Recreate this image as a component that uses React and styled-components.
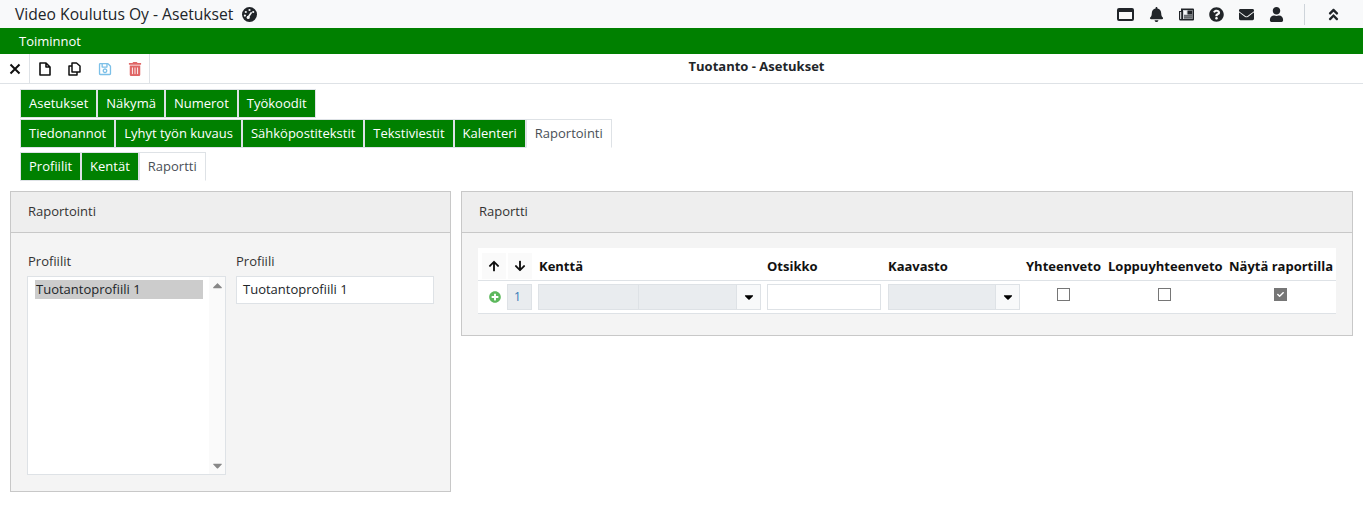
import React from "react";
import styled, { createGlobalStyle } from "styled-components";
import {
  FaBell,
  FaQuestionCircle,
  FaEnvelope,
  FaUser,
  FaAngleDoubleUp,
  FaRegSave,
  FaTrashAlt,
  FaCaretDown,
  FaCaretUp,
  FaPlusCircle,
  FaCheck,
  FaArrowUp,
  FaArrowDown,
} from "react-icons/fa";

const GlobalStyle = createGlobalStyle`
  html, body { margin: 0; padding: 0; background: #fff; }
  body { font-family: "Open Sans", "Noto Sans", sans-serif; font-size: 13px; color: #212529; }
  * { box-sizing: border-box; }
`;

const Page = styled.div`
  width: 1363px;
  height: 528px;
  overflow: hidden;
`;

const TopBar = styled.header`
  height: 28px;
  background: #f8f9fa;
  display: flex;
  align-items: center;
  padding-left: 15px;
`;

const AppTitle = styled.div`
  font-size: 15.65px;
  color: #212529;
  line-height: 28px;
`;

const TitleIcon = styled.span`
  display: inline-flex;
  margin-left: 9px;
`;

const TopIcons = styled.div`
  margin-left: auto;
  display: flex;
  align-items: center;
  color: #212529;
`;

const TopIcon = styled.span`
  display: flex;
  justify-content: center;
  width: 30px;
  font-size: 15px;
`;

const WindowIcon = styled.span`
  display: block;
  width: 17px;
  height: 13px;
  border: 2px solid #212529;
  border-top-width: 4px;
  border-radius: 2px;
  margin-right: 2px;
`;

const TopDivider = styled.span`
  width: 1px;
  height: 21px;
  background: #ced4da;
  margin: 0 19px 0 13px;
`;

const CollapseIcon = styled.span`
  display: flex;
  width: 18px;
  margin-right: 21px;
  justify-content: center;
  font-size: 15px;
`;

const MenuBar = styled.nav`
  height: 26px;
  background: #008000;
  color: #fff;
  padding-left: 19px;
  line-height: 26px;
  font-size: 13px;
`;

const ToolBar = styled.div`
  height: 30px;
  display: flex;
  border-bottom: 1px solid #dee2e6;
`;

const ToolGroup = styled.div`
  height: 29px;
  display: flex;
  align-items: center;
  padding: 0 7px;
  gap: ${(p) => p.$gap || 0}px;
  border-right: 1px solid #dee2e6;
`;

const ToolIcon = styled.span`
  display: flex;
  width: 15px;
  justify-content: center;
  font-size: ${(p) => p.$size || 14}px;
  color: ${(p) => p.$color || "#111"};
`;

const ViewTitle = styled.div`
  flex: 1;
  text-align: center;
  font-weight: 700;
  font-size: 13px;
  line-height: 25px;
  color: #212529;
`;

const TabArea = styled.div`
  padding: 5px 0 0 20px;
`;

const TabRow = styled.div`
  display: flex;
  height: 29px;
  margin-bottom: ${(p) => p.$after || 0}px;
`;

const Tab = styled.div`
  height: 29px;
  padding: 0 8px;
  line-height: 27px;
  font-size: 13px;
  border: 1px solid #dee2e6;
  border-bottom-color: ${(p) => (p.$active ? "#fff" : "#dee2e6")};
  background: ${(p) => (p.$active ? "#fff" : "#008000")};
  color: ${(p) => (p.$active ? "#495057" : "#fff")};
`;

const Panels = styled.main`
  display: flex;
  align-items: flex-start;
  gap: 10px;
  padding: 10px 10px 0;
`;

const Panel = styled.section`
  width: ${(p) => p.$width}px;
  height: ${(p) => p.$height}px;
  background: #f4f4f4;
  border: 1px solid #c8c8c8;
`;

const PanelHeader = styled.div`
  height: 41px;
  background: #eeeeee;
  border-bottom: 1px solid #c8c8c8;
  padding-left: 17px;
  line-height: 38px;
  font-size: 13px;
  color: #333;
`;

const ProfileBody = styled.div`
  display: flex;
  gap: 10px;
  padding: 20px 16px 0 16px;
`;

const Field = styled.div`
  width: ${(p) => p.$width}px;
`;

const FieldLabel = styled.div`
  height: 23px;
  line-height: 16px;
  padding-left: ${(p) => p.$indent || 0}px;
  font-size: 13px;
  color: #333;
`;

const ListBox = styled.div`
  height: 199px;
  background: #fff;
  border: 1px solid #dee2e6;
  display: flex;
  justify-content: space-between;
`;

const ListItems = styled.div`
  padding: 3px 0 0 7px;
  flex: 1;
`;

const ListItem = styled.div`
  width: 168px;
  height: 19px;
  line-height: 19px;
  padding-left: 1px;
  background: #cccccc;
  font-size: 13px;
  color: #212529;
`;

const ScrollTrack = styled.div`
  width: 16px;
  background: #fafafa;
  display: flex;
  flex-direction: column;
  justify-content: space-between;
  align-items: center;
  padding: 1px 0;
  color: #888;
  font-size: 15px;
`;

const TextBox = styled.div`
  height: 28px;
  line-height: 24px;
  padding-left: 6px;
  background: #fff;
  border: 1px solid #dee2e6;
  font-size: 13px;
  color: #212529;
`;

const ReportBody = styled.div`
  padding: 15px 16px 0;
`;

const Table = styled.div`
  background: #fff;
  width: 858px;
`;

const Row = styled.div`
  display: grid;
  grid-template-columns: 29px 31px 223px 6px 114px 7px 132px 6px 76px 6px 115px 6px 107px;
  height: 33px;
  border-bottom: 1px solid #dee2e6;
  align-items: center;
`;

const HeadCell = styled.div`
  grid-column: ${(p) => p.$col};
  font-weight: 700;
  font-size: 13px;
  color: #111;
  line-height: 33px;
  padding-top: 2px;
  padding-left: ${(p) => p.$indent || 0}px;
  white-space: nowrap;
`;

const SortButton = styled.div`
  width: 24px;
  height: 26px;
  margin-left: ${(p) => p.$left}px;
  background: #fafafa;
  display: flex;
  align-items: center;
  justify-content: center;
  font-size: 12px;
  color: #111;
`;

const AddCell = styled.div`
  display: flex;
  justify-content: center;
  padding-left: 4px;
  color: #5cb85c;
  font-size: 12px;
`;

const RowNumber = styled.div`
  width: 25px;
  height: 26px;
  background: #e9ecef;
  border: 1px solid #dee2e6;
  padding-left: 6px;
  line-height: 24px;
  color: #337ab7;
  font-size: 12px;
`;

const Combo = styled.div`
  display: flex;
  height: 26px;
  border: 1px solid #dee2e6;
  background: #e9ecef;
`;

const ComboPart = styled.div`
  width: ${(p) => p.$width}px;
  border-right: 1px solid #dee2e6;
  flex: ${(p) => (p.$width ? "none" : 1)};
`;

const ComboArrow = styled.div`
  width: 23px;
  background: #f8f9fa;
  display: flex;
  align-items: center;
  justify-content: center;
  color: #000;
  font-size: 14px;
`;

const Input = styled.div`
  height: 26px;
  background: #fff;
  border: 1px solid #dee2e6;
`;

const CheckCell = styled.div`
  grid-column: ${(p) => p.$col};
  display: flex;
  justify-content: center;
  padding-bottom: 5px;
  padding-right: ${(p) => p.$shift}px;
`;

const Check = styled.span`
  width: 13px;
  height: 13px;
  border: 1px solid #767676;
  background: ${(p) => (p.$on ? "#767676" : "#fff")};
  color: #fff;
  display: flex;
  align-items: center;
  justify-content: center;
  font-size: 7px;
`;

const GaugeIcon = () => (
  <svg width="15" height="15" viewBox="0 0 15 15">
    <circle cx="7.5" cy="7.5" r="7.5" fill="#212529" />
    <circle cx="7.5" cy="3" r="1.1" fill="#f8f9fa" />
    <circle cx="3.8" cy="5" r="1.1" fill="#f8f9fa" />
    <circle cx="11.2" cy="5" r="1.1" fill="#f8f9fa" />
    <circle cx="2.9" cy="8.6" r="1.1" fill="#f8f9fa" />
    <path d="M6 10.5 L9.6 5.2" stroke="#f8f9fa" strokeWidth="1.6" />
    <circle cx="6.2" cy="10.4" r="1.6" fill="#f8f9fa" />
  </svg>
);

const PaperIcon = () => (
  <svg width="15" height="13" viewBox="0 0 15 13">
    <path d="M3 0.5 H14 a1 1 0 0 1 1 1 V11.5 a1 1 0 0 1 -1 1 H1.5 A1.5 1.5 0 0 1 0 11 V3 H2 V0.5 Z" fill="#212529" />
    <rect x="1.2" y="4" width="1" height="7" fill="#f8f9fa" />
    <rect x="4" y="2" width="9.5" height="9" fill="#cfd2d6" />
    <rect x="8.5" y="2.5" width="4.5" height="4" fill="#212529" />
    <rect x="5" y="3" width="2.5" height="3" fill="#f8f9fa" />
    <rect x="5" y="7.4" width="8" height="1.1" fill="#212529" />
    <rect x="5" y="9.4" width="8" height="1" fill="#212529" />
  </svg>
);

const CloseIcon = () => (
  <svg width="12" height="12" viewBox="0 0 12 12">
    <path d="M1.5 1.5 L10.5 10.5 M10.5 1.5 L1.5 10.5" stroke="#111" strokeWidth="2" fill="none" />
  </svg>
);

const FileIcon = () => (
  <svg width="12" height="14" viewBox="0 0 12 14">
    <path d="M1 1 H7 L11 5 V13 H1 Z M7 1 V5 H11" stroke="#111" strokeWidth="1.6" fill="#fff" strokeLinejoin="round" />
  </svg>
);

const CopyIcon = () => (
  <svg width="13" height="14" viewBox="0 0 13 14">
    <path d="M4 1 H8.5 L12 4 V10 H4 Z" stroke="#111" strokeWidth="1.5" fill="#fff" strokeLinejoin="round" />
    <path d="M4 4 H1 V13 H9 V10" stroke="#111" strokeWidth="1.5" fill="none" strokeLinejoin="round" />
  </svg>
);

const App = () => {
  return (
    <Page>
      <GlobalStyle />
      <TopBar>
        <AppTitle>Video Koulutus Oy - Asetukset</AppTitle>
        <TitleIcon><GaugeIcon /></TitleIcon>
        <TopIcons>
          <TopIcon><WindowIcon /></TopIcon>
          <TopIcon><FaBell /></TopIcon>
          <TopIcon><PaperIcon /></TopIcon>
          <TopIcon><FaQuestionCircle /></TopIcon>
          <TopIcon><FaEnvelope /></TopIcon>
          <TopIcon><FaUser /></TopIcon>
          <TopDivider />
          <CollapseIcon><FaAngleDoubleUp /></CollapseIcon>
        </TopIcons>
      </TopBar>
      <MenuBar>Toiminnot</MenuBar>
      <ToolBar>
        <ToolGroup><ToolIcon><CloseIcon /></ToolIcon></ToolGroup>
        <ToolGroup $gap={15}>
          <ToolIcon><FileIcon /></ToolIcon>
          <ToolIcon><CopyIcon /></ToolIcon>
          <ToolIcon $color="#7cc0e8"><FaRegSave /></ToolIcon>
          <ToolIcon $color="#e06666"><FaTrashAlt /></ToolIcon>
        </ToolGroup>
        <ViewTitle>Tuotanto - Asetukset</ViewTitle>
      </ToolBar>
      <TabArea>
        <TabRow $after={1}>
          <Tab>Asetukset</Tab>
          <Tab>Näkymä</Tab>
          <Tab>Numerot</Tab>
          <Tab>Työkoodit</Tab>
        </TabRow>
        <TabRow $after={4}>
          <Tab>Tiedonannot</Tab>
          <Tab>Lyhyt työn kuvaus</Tab>
          <Tab>Sähköpostitekstit</Tab>
          <Tab>Tekstiviestit</Tab>
          <Tab>Kalenteri</Tab>
          <Tab $active>Raportointi</Tab>
        </TabRow>
        <TabRow>
          <Tab>Profiilit</Tab>
          <Tab>Kentät</Tab>
          <Tab $active>Raportti</Tab>
        </TabRow>
      </TabArea>
      <Panels>
        <Panel $width={441} $height={301}>
          <PanelHeader>Raportointi</PanelHeader>
          <ProfileBody>
            <Field $width={199}>
              <FieldLabel $indent={1}>Profiilit</FieldLabel>
              <ListBox>
                <ListItems><ListItem>Tuotantoprofiili 1</ListItem></ListItems>
                <ScrollTrack><FaCaretUp /><FaCaretDown /></ScrollTrack>
              </ListBox>
            </Field>
            <Field $width={198}>
              <FieldLabel>Profiili</FieldLabel>
              <TextBox>Tuotantoprofiili 1</TextBox>
            </Field>
          </ProfileBody>
        </Panel>
        <Panel $width={892} $height={145}>
          <PanelHeader>Raportti</PanelHeader>
          <ReportBody>
            <Table>
              <Row>
                <SortButton $left={4}><FaArrowUp /></SortButton>
                <SortButton $left={1}><FaArrowDown /></SortButton>
                <HeadCell $col={3} $indent={1}>Kenttä</HeadCell>
                <HeadCell $col={5}>Otsikko</HeadCell>
                <HeadCell $col={7}>Kaavasto</HeadCell>
                <HeadCell $col={9}>Yhteenveto</HeadCell>
                <HeadCell $col={11}>Loppuyhteenveto</HeadCell>
                <HeadCell $col={13}>Näytä raportilla</HeadCell>
              </Row>
              <Row>
                <AddCell><FaPlusCircle /></AddCell>
                <RowNumber>1</RowNumber>
                <Combo>
                  <ComboPart $width={100} />
                  <ComboPart />
                  <ComboArrow><FaCaretDown /></ComboArrow>
                </Combo>
                <div />
                <Input />
                <div />
                <Combo>
                  <ComboPart />
                  <ComboArrow><FaCaretDown /></ComboArrow>
                </Combo>
                <CheckCell $col={9} $shift={2}><Check /></CheckCell>
                <CheckCell $col={11} $shift={2}><Check /></CheckCell>
                <CheckCell $col={13} $shift={4}><Check $on><FaCheck /></Check></CheckCell>
              </Row>
            </Table>
          </ReportBody>
        </Panel>
      </Panels>
    </Page>
  );
};

export default App;
